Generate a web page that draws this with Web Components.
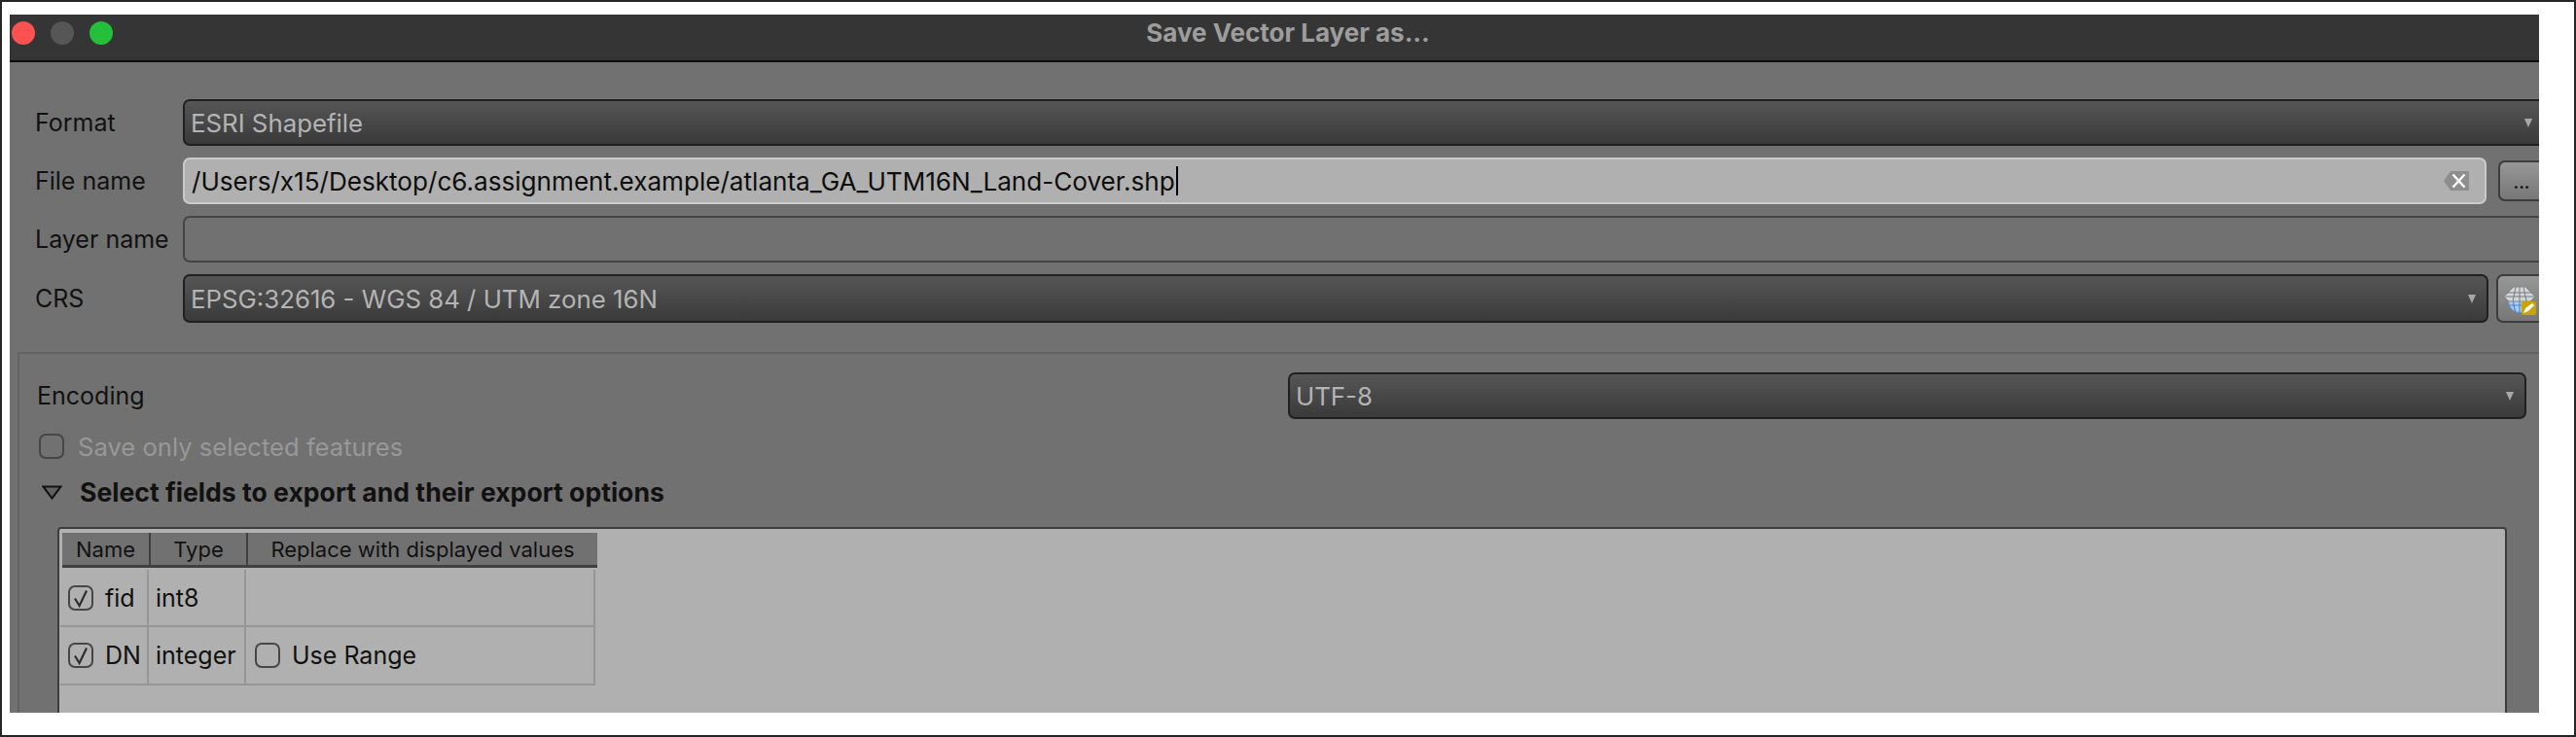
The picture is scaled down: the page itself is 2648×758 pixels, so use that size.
<!DOCTYPE html>
<html>
<head>
<meta charset="utf-8">
<title>Save Vector Layer as...</title>
<style>
  html, body { margin: 0; padding: 0; background: #fff; }
  body { width: 2648px; height: 758px; box-sizing: border-box; font-family: Inter, "Liberation Sans", sans-serif; font-size: 25px; color: #111; }
</style>
</head>
<body>
<save-dialog>
  <title-bar slot="title">Save Vector Layer as...</title-bar>

  <form-row label="Format"><combo-box>ESRI Shapefile</combo-box></form-row>
  <form-row label="File name">
    <line-edit>/Users/x15/Desktop/c6.assignment.example/atlanta_GA_UTM16N_Land-Cover.shp</line-edit>
    <tool-button kind="dots"></tool-button>
  </form-row>
  <form-row label="Layer name"><line-edit empty></line-edit></form-row>
  <form-row label="CRS" tall>
    <combo-box>EPSG:32616 - WGS 84 / UTM zone 16N</combo-box>
    <tool-button kind="globe"></tool-button>
  </form-row>

  <group-box>
    <encoding-row label="Encoding" value="UTF-8"></encoding-row>
    <check-box class="save" disabled>Save only selected features</check-box>
    <collapse-title>Select fields to export and their export options</collapse-title>
    <field-table>
      <field-row name="fid" type="int8" checked></field-row>
      <field-row name="DN" type="integer" checked range></field-row>
    </field-table>
  </group-box>
</save-dialog>

<script>
// small helper, every element is just a template in an open shadow root
function makeElement(name, html, setup) {
  const template = document.createElement('template');
  template.innerHTML = html;
  customElements.define(name, class extends HTMLElement {
    constructor() {
      super();
      const shadow = this.attachShadow({ mode: 'open' });
      shadow.appendChild(template.content.cloneNode(true));
      if (setup) setup(this, shadow);
    }
  });
}

const checkIcon = `<svg viewBox="0 0 26 26" width="26" height="26"><path d="M7 13.5l4.6 7.5L19 5.5" fill="none" stroke="#2e2e2e" stroke-width="2.2"/></svg>`;

makeElement('save-dialog', `
  <style>
    :host { display: block; height: 758px; box-sizing: border-box; border: 2px solid #262626; padding: 13px 0 0 8px; }
    .clip { width: 2600px; height: 718px; overflow: hidden; background: #717171; }
    .win { width: 2628px; }
    .form { display: flex; flex-direction: column; gap: 12px; padding: 38px 22px 0 26px; }
  </style>
  <div class="clip">
    <div class="win">
      <slot name="title"></slot>
      <div class="form"><slot></slot></div>
    </div>
  </div>
`);

makeElement('title-bar', `
  <style>
    :host { display: block; height: 47px; background: #353535; border-bottom: 2px solid #0c0c0c; position: relative; }
    .title { height: 36px; display: flex; align-items: center; justify-content: center; font-weight: 700; font-size: 26px; color: #9d9d9d; }
    .lights { position: absolute; left: 2px; top: 7px; display: flex; gap: 16px; }
    .lights i { width: 24px; height: 24px; border-radius: 50%; display: block; }
  </style>
  <div class="lights">
    <i style="background:#fc5151"></i><i style="background:#565656"></i><i style="background:#24c03c"></i>
  </div>
  <div class="title"><slot></slot></div>
`);

makeElement('form-row', `
  <style>
    :host { display: grid; grid-template-columns: 152px 1fr; height: 48px; align-items: center; }
    :host([tall]) { height: 50px; }
    .controls { display: flex; align-items: stretch; height: 100%; }
    label { color: #111; }
    :host(:nth-of-type(2)) .controls { gap: 12px; align-items: center; }
    :host([tall]) .controls { gap: 8px; }
  </style>
  <label></label>
  <div class="controls"><slot></slot></div>
`, (el, shadow) => { shadow.querySelector('label').textContent = el.getAttribute('label'); });

makeElement('combo-box', `
  <style>
    :host { flex: 1; display: flex; align-items: center; box-sizing: border-box; height: 100%; padding: 0 11px 0 6px; font-size: 25.8px;
      background: linear-gradient(#565656, #3a3a3a); border: 2px solid #202020; border-radius: 7px; color: #b4b4b4; }
    .text { flex: 1; }
    i { width: 0; height: 0; border-left: 4px solid transparent; border-right: 4px solid transparent; border-top: 9px solid #a8a8a8; display: block; }
  </style>
  <div class="text"><slot></slot></div><i></i>
`);

makeElement('line-edit', `
  <style>
    :host { flex: 1; display: flex; align-items: center; box-sizing: border-box; height: 48px; padding: 0 16px 0 7px; font-size: 26.1px;
      background: #b0b0b0; border: 2px solid #cacaca; border-radius: 7px; color: #0d0d0d; }
    :host([empty]) { background: #717171; border-color: #444; }
    .text { flex: 1; display: flex; align-items: center; }
    .caret { width: 2px; height: 30px; background: #000; margin-left: 1px; }
    :host([empty]) .caret, :host([empty]) svg { display: none; }
  </style>
  <div class="text"><slot></slot><span class="caret"></span></div>
  <svg width="26" height="20" viewBox="0 0 26 20"><path d="M7 0h19v20H7L0 10z" fill="#8e8e8e"/><path d="M9.500 3.500l12 13M21.500 3.500l-12 13" stroke="#fff" stroke-width="2.400"/></svg>
`);

makeElement('tool-button', `
  <style>
    :host { display: flex; align-items: center; justify-content: center; box-sizing: border-box; width: 48px; height: 42px;
      background: linear-gradient(#979797, #777); border: 2px solid #3c3c3c; border-radius: 7px; flex: none; }
    :host([kind="globe"]) { width: 50px; height: 50px; }
    .dots { font-size: 17px; font-weight: 700; color: #111; line-height: 1; margin-top: 4px; }
  </style>
  <span class="dots"></span>
`, (el, shadow) => {
  const holder = shadow.querySelector('.dots');
  if (el.getAttribute('kind') === 'dots') {
    holder.textContent = '...';
  } else {
    holder.innerHTML = `<svg width="34" height="32" viewBox="0 0 34 32" style="display:block">
      <circle cx="16" cy="17" r="11.500" fill="#a9cdf2" stroke="#5f93cc" stroke-width="1"/>
      <path d="M5 21h22M16 12v17M10 12q-1 9 2 16M22 12q1 9-2 16" fill="none" stroke="#4f86c4" stroke-width="1.200"/>
      <path d="M10 2h12l10 10-5 5H5l-5-5z" fill="#d2d5d8" stroke="#85878a" stroke-width="1"/>
      <path d="M3 8h26M1 12h30M12 2L9 17M20 2l3 15M16 2v15" fill="none" stroke="#797b7e" stroke-width="1"/>
      <rect x="18" y="17" width="15" height="14" rx="2" fill="#c9a406"/>
      <path d="M20 29l2-5 7-5 2 2-6 6z" fill="#fff"/>
    </svg>`;
  }
});

makeElement('group-box', `
  <style>
    :host { display: block; margin: 18px -14px 0 -18px; border-top: 2px solid #626262; border-left: 2px solid #626262; padding: 19px 0 0 18px; }
    ::slotted(check-box.save) { margin: 15px 0 0 2px; --check-gap: 14px; font-size: 25.6px; }
  </style>
  <slot></slot>
`);

makeElement('encoding-row', `
  <style>
    :host { display: grid; grid-template-columns: 1286px 1fr; align-items: center; height: 48px; padding-right: 33px; }
  </style>
  <label></label><combo-box></combo-box>
`, (el, shadow) => {
  shadow.querySelector('label').textContent = el.getAttribute('label');
  shadow.querySelector('combo-box').textContent = el.getAttribute('value');
});

makeElement('check-box', `
  <style>
    :host { display: flex; align-items: center; gap: var(--check-gap, 12px); height: 26px; }
    :host([disabled]) { color: #989898; }
    .box { width: 26px; height: 26px; box-sizing: border-box; border: 2px solid #464646; border-radius: 7px; flex: none; }
    .box svg { display: block; margin: -2px; }
  </style>
  <span class="box"></span><span><slot></slot></span>
`, (el, shadow) => {
  if (el.hasAttribute('checked')) shadow.querySelector('.box').innerHTML = checkIcon;
});

makeElement('collapse-title', `
  <style>
    :host { display: flex; align-items: center; gap: 18px; margin-top: 19px; height: 30px; font-weight: 700; font-size: 26.600px; padding-left: 5px; }
  </style>
  <svg width="21" height="15" viewBox="0 0 21 15"><path d="M1.500 1.500h18L10.500 13.500z" fill="#606060" stroke="#111" stroke-width="2"/></svg>
  <span><slot></slot></span>
`);

makeElement('field-table', `
  <style>
    :host { display: block; margin: 21px 53px 0 21px; height: 300px; box-sizing: border-box; border: 2px solid #3d3d3d; border-radius: 4px 4px 0 0; background: #b0b0b0; padding-top: 4px; font-size: 25px; }
    .head { display: grid; grid-template-columns: 91px 100px 359px; width: 550px; height: 36px; margin-left: 3px; box-sizing: border-box; background: #717171; border-bottom: 3px solid #404040; font-size: 22px; }
    .head span { display: flex; align-items: center; justify-content: center; border-right: 2px solid #404040; }
    .head span:last-child { border-right: 0; }
    .rows { margin: 2px 0 0 1px; width: 548px; border-right: 2px solid #969696; }
  </style>
  <div class="head"><span>Name</span><span>Type</span><span>Replace with displayed values</span></div>
  <div class="rows"><slot></slot></div>
`);

makeElement('field-row', `
  <style>
    :host { display: grid; grid-template-columns: 91px 100px 1fr; height: 59px; box-sizing: border-box; border-bottom: 2px solid #969696; }
    :host(:last-child) { height: 60px; }
    div { display: flex; align-items: center; border-right: 2px solid #969696; box-sizing: border-box; padding-left: 8px; }
    div.type { padding-left: 7px; }
    div:last-child { border-right: 0; padding-left: 9px; }
  </style>
  <div><check-box class="name"></check-box></div>
  <div class="type"></div>
  <div class="extra"></div>
`, (el, shadow) => {
  const box = shadow.querySelector('.name');
  box.textContent = el.getAttribute('name');
  if (el.hasAttribute('checked')) box.setAttribute('checked', '');
  box.shadowRoot.querySelector('.box').innerHTML = checkIcon;
  shadow.querySelector('.type').textContent = el.getAttribute('type');
  if (el.hasAttribute('range')) {
    const range = document.createElement('check-box');
    range.textContent = 'Use Range';
    shadow.querySelector('.extra').appendChild(range);
  }
});
</script>
</body>
</html>
